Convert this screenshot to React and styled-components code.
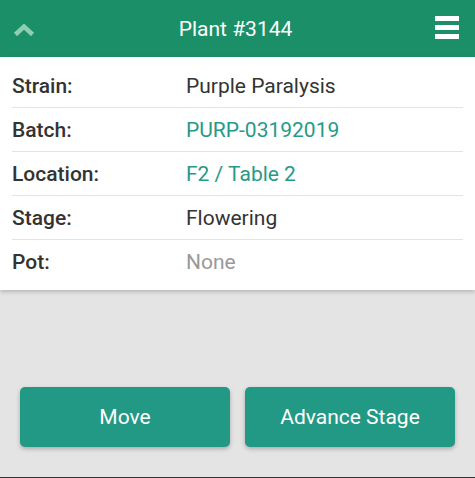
import styled, { createGlobalStyle } from 'styled-components';

const GlobalStyle = createGlobalStyle`
  html, body { margin: 0; padding: 0; }
  body {
    font-family: Roboto, "Liberation Sans", sans-serif;
    background: #e4e4e4;
  }
  * { box-sizing: border-box; }
`

const rows = [
  { label: 'Strain:', value: 'Purple Paralysis', kind: 'plain' },
  { label: 'Batch:', value: 'PURP-03192019', kind: 'link' },
  { label: 'Location:', value: 'F2 / Table 2', kind: 'link' },
  { label: 'Stage:', value: 'Flowering', kind: 'plain' },
  { label: 'Pot:', value: 'None', kind: 'muted' },
]

const App = () => {
  return (
    <>
      <GlobalStyle />
      <Page>
        <Header>
          <IconBtn>
            <svg width="22" height="16" viewBox="0 0 22 16">
              <path d="M2.5 12.5 L11 4.5 L19.5 12.5" fill="none" stroke="#8ecfb4" strokeWidth="4.5" />
            </svg>
          </IconBtn>
          <Title>Plant #3144</Title>
          <IconBtn>
            <Burger>
              <Bar />
              <Bar />
              <Bar />
            </Burger>
          </IconBtn>
        </Header>
        <Card>
          {rows.map((r, i) => (
            <Row key={r.label} last={i === rows.length - 1}>
              <Label>{r.label}</Label>
              <Value kind={r.kind}>{r.value}</Value>
            </Row>
          ))}
        </Card>
        <Spacer />
        <Actions>
          <ActionBtn>Move</ActionBtn>
          <ActionBtn>Advance Stage</ActionBtn>
        </Actions>
      </Page>
    </>
  );
}

const Page = styled.div`
  height: 478px;
  display: flex;
  flex-direction: column;
  border-bottom: 1px solid #333;
`
const Header = styled.div`
  height: 57px;
  background: #1a8f68;
  display: flex;
  align-items: center;
  justify-content: space-between;
  padding: 0 15px 0 11px;
`
const IconBtn = styled.div`
  width: 26px;
  display: flex;
  align-items: center;
  justify-content: center;
  &:first-child { margin-top: 3px; }
`
const Title = styled.div`
  color: #fff;
  font-size: 21px;
  font-weight: 400;
`
const Burger = styled.div`
  display: flex;
  flex-direction: column;
  gap: 4px;
  margin-top: -3px;
`
const Bar = styled.div`
  width: 24px;
  height: 5px;
  background: #fff;
`
const Card = styled.div`
  background: #fff;
  padding: 7px 12px 6px;
  box-shadow: 0 2px 4px rgba(0, 0, 0, 0.2);
  position: relative;
`
const Row = styled.div`
  height: 44px;
  display: flex;
  align-items: center;
  border-bottom: ${p => (p.last ? 'none' : '1px solid #e3e3e3')};
  font-size: 21px;
`
const Label = styled.div`
  width: 174px;
  color: #333;
  font-weight: 500;
`
const Value = styled.div`
  color: ${p => (p.kind === 'link' ? '#279a85' : p.kind === 'muted' ? '#999' : '#333')};
`
const Spacer = styled.div`
  flex: 1;
`
const Actions = styled.div`
  display: flex;
  gap: 15px;
  padding: 0 20px 30px;
`
const ActionBtn = styled.button`
  flex: 1;
  height: 60px;
  border: none;
  border-radius: 5px;
  background: #219984;
  color: #fff;
  font-family: Roboto, "Liberation Sans", sans-serif;
  font-size: 21px;
  box-shadow: 0 2px 4px rgba(0, 0, 0, 0.25);
`

export default App;
